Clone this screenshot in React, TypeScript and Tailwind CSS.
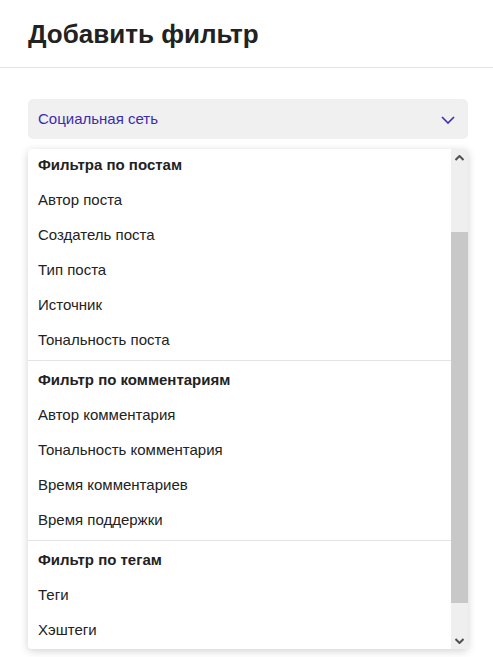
type Section = {
  title: string;
  items: string[];
};

const sections: Section[] = [
  {
    title: "Фильтра по постам",
    items: ["Автор поста", "Создатель поста", "Тип поста", "Источник", "Тональность поста"],
  },
  {
    title: "Фильтр по комментариям",
    items: ["Автор комментария", "Тональность комментария", "Время комментариев", "Время поддержки"],
  },
  {
    title: "Фильтр по тегам",
    items: ["Теги", "Хэштеги"],
  },
];

function SelectChevron() {
  return (
    <svg width="14" height="8" viewBox="0 0 14 8" aria-hidden>
      <path d="M1 1 L7 7 L13 1" fill="none" stroke="#3b2bb0" strokeWidth="1.6" />
    </svg>
  );
}

function ArrowUp() {
  return (
    <svg width="9" height="6" viewBox="0 0 9 6" aria-hidden>
      <path d="M0.5 5 L4.5 1 L8.5 5" fill="none" stroke="#505050" strokeWidth="2" />
    </svg>
  );
}

function ArrowDown() {
  return (
    <svg width="9" height="6" viewBox="0 0 9 6" aria-hidden>
      <path d="M0.5 1 L4.5 5 L8.5 1" fill="none" stroke="#505050" strokeWidth="2" />
    </svg>
  );
}

export default function App() {
  return (
    <div className="min-h-[657px] w-[493px] bg-white font-['Liberation_Sans',Arial,sans-serif] text-[#222]">
      <header className="flex h-[68px] items-center border-b border-[#e4e4e4] pl-[28px]">
        <h1 className="text-[26px] font-bold leading-none text-[#222]">Добавить фильтр</h1>
      </header>

      <div className="pl-[28px] pr-[25px] pt-[31px]">
        <button
          type="button"
          className="flex h-[40px] w-full items-center justify-between rounded-[5px] bg-[#f0f0f0] pl-[10px] pr-[13px] pt-[1px] text-left"
        >
          <span className="text-[15px] text-[#3b2bb0]">Социальная сеть</span>
          <SelectChevron />
        </button>

        <div className="mt-[10px] flex h-[500px] overflow-hidden rounded-[4px] bg-white shadow-[0_2px_8px_rgba(0,0,0,0.18)]">
          <div className="flex-1 overflow-hidden">
            {/* list is scrolled a few pixels past the top */}
            <div className="-mt-[3px]">
              {sections.map((section, i) => (
                <div key={section.title} className={i > 0 ? "border-t border-[#e4e4e4] py-[2px]" : "py-[2px]"}>
                  <div className="flex h-[35px] items-center px-[10px] text-[15px] font-bold text-[#222]">
                    {section.title}
                  </div>
                  {section.items.map((item) => (
                    <div key={item} className="flex h-[35px] items-center px-[10px] text-[15px] text-[#222]">
                      {item}
                    </div>
                  ))}
                </div>
              ))}
            </div>
          </div>

          <div className="flex w-[17px] flex-col bg-[#efefef]">
            <div className="flex h-[17px] items-center justify-center">
              <ArrowUp />
            </div>
            <div className="flex-1 pt-[66px] pb-[29px]">
              <div className="h-full bg-[#c8c8c8]" />
            </div>
            <div className="flex h-[17px] items-center justify-center">
              <ArrowDown />
            </div>
          </div>
        </div>
      </div>
    </div>
  );
}
